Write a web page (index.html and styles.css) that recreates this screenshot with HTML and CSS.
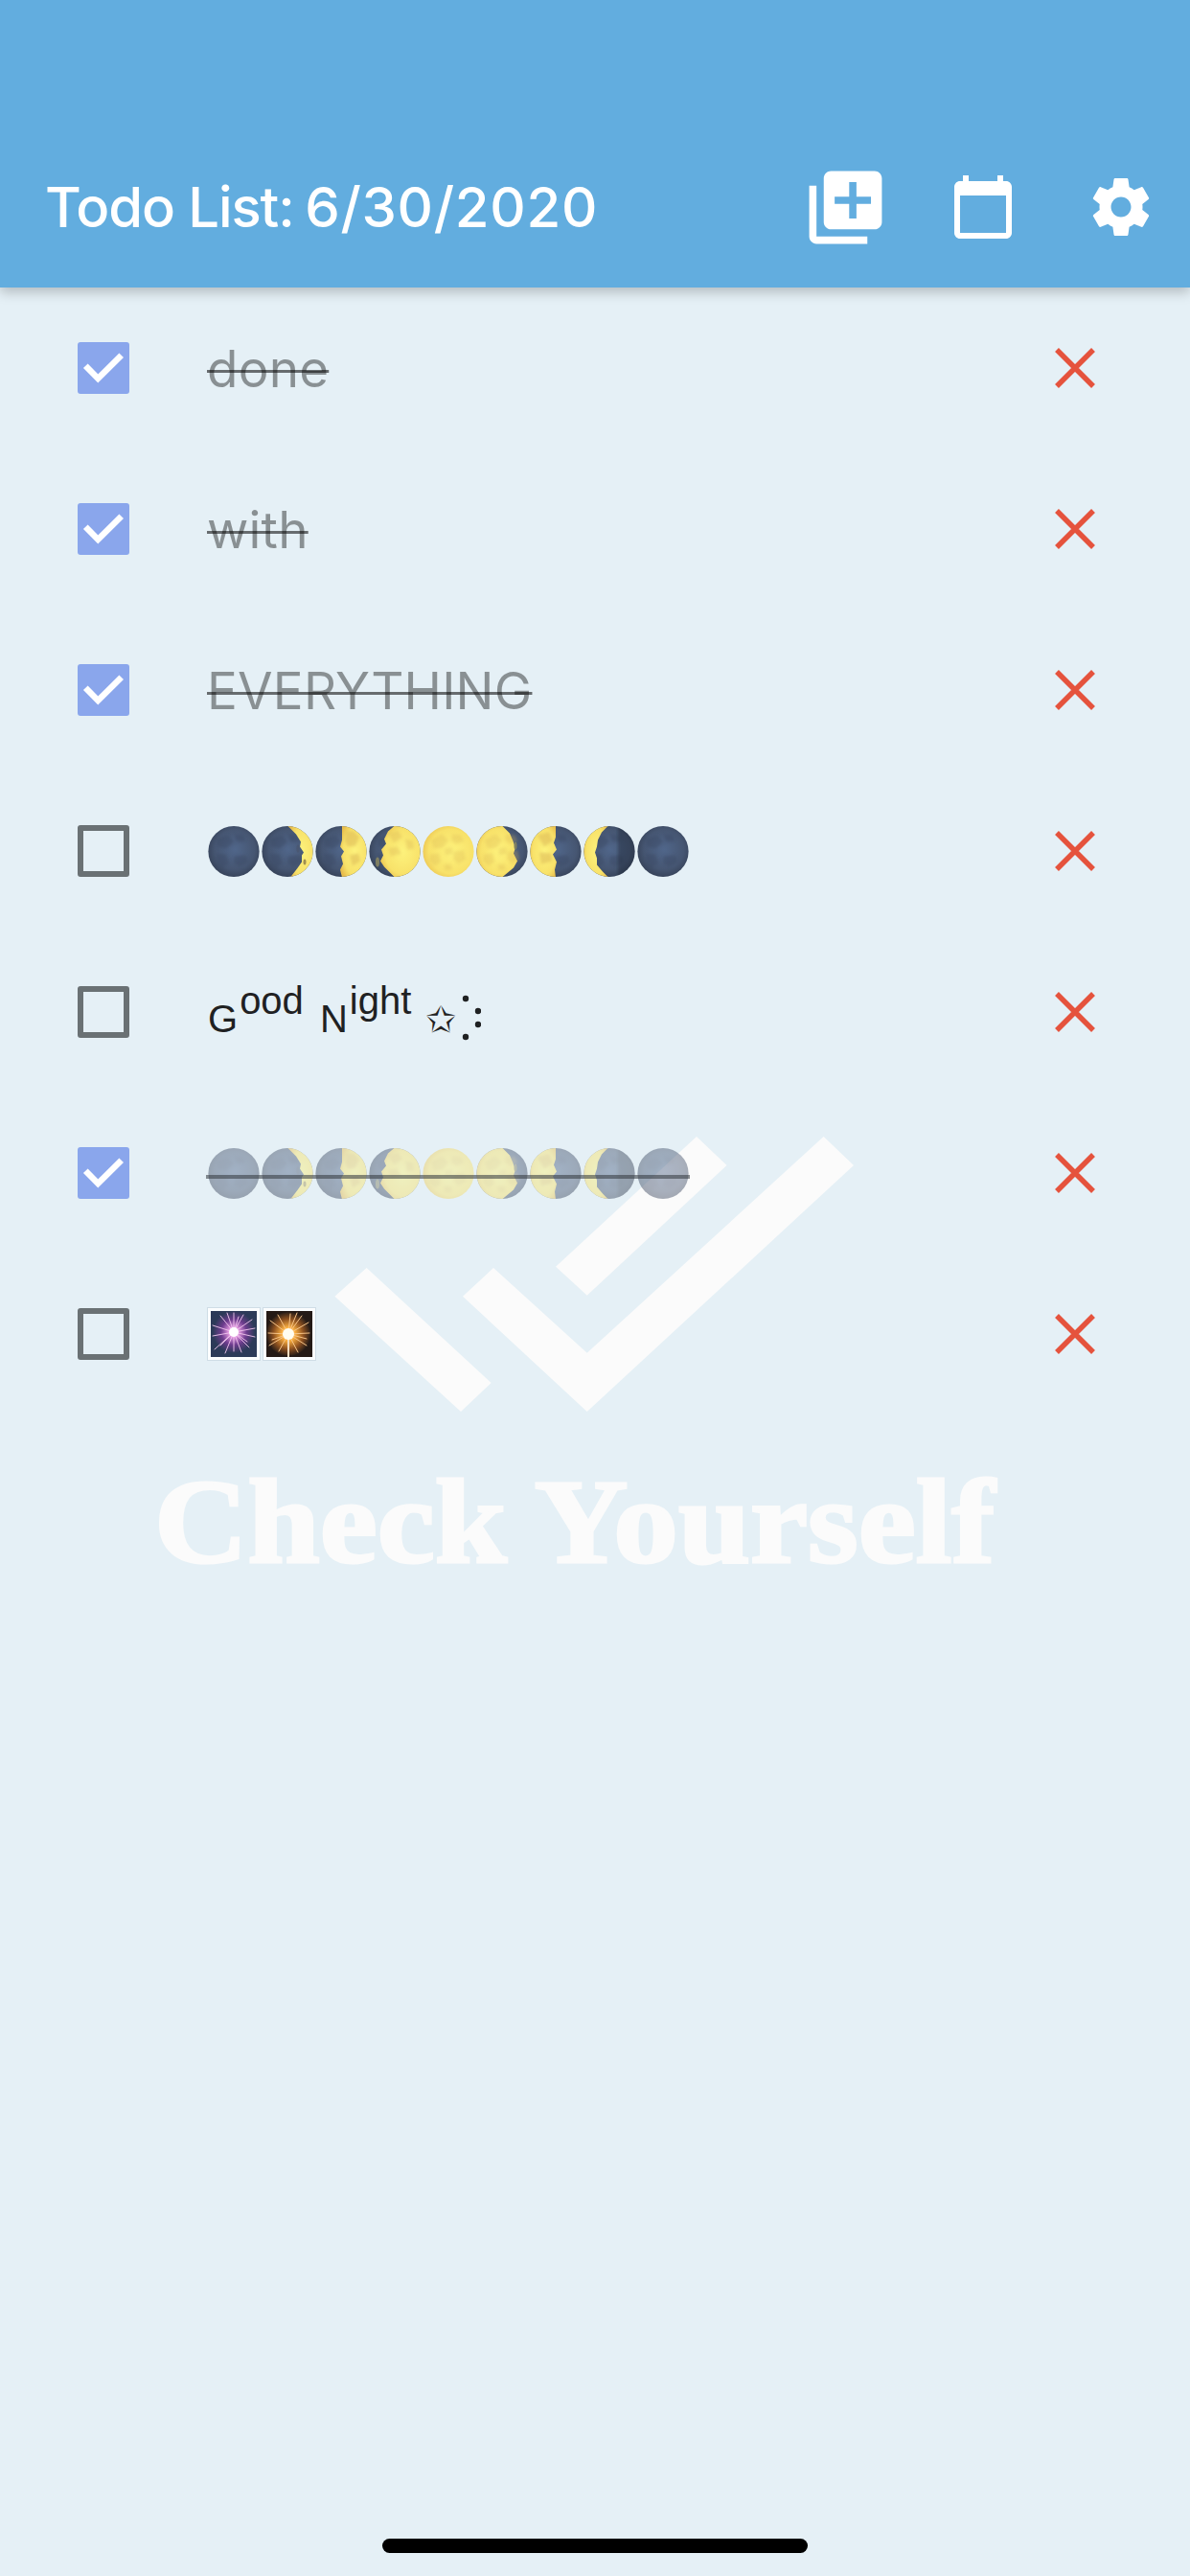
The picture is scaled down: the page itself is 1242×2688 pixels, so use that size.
FILE: index.html
```html
<!DOCTYPE html>
<html lang="en">
<head>
<meta charset="utf-8">
<title>Todo List</title>
<link rel="stylesheet" href="styles.css">
</head>
<body>
<svg class="sprite" aria-hidden="true">
  <defs>
    <filter id="soft" x="-10%" y="-10%" width="120%" height="120%"><feGaussianBlur stdDeviation="1.4"/></filter>
    <radialGradient id="darkGrad" cx="52%" cy="46%" r="60%">
      <stop offset="0" stop-color="#50668a"/>
      <stop offset="0.65" stop-color="#465672"/>
      <stop offset="1" stop-color="#323d52"/>
    </radialGradient>
    <radialGradient id="litGrad" cx="55%" cy="50%" r="62%">
      <stop offset="0" stop-color="#fdf27c"/>
      <stop offset="0.7" stop-color="#f8e26a"/>
      <stop offset="1" stop-color="#e8bd4c"/>
    </radialGradient>
    <clipPath id="disc"><circle cx="27" cy="27" r="26.6"/></clipPath>
    <g id="base">
      <circle cx="27" cy="27" r="26.6" fill="url(#darkGrad)"/>
      <g fill="#3b4965" opacity=".45" filter="url(#soft)">
        <path d="M9 14l12-4 6 7-8 7-9-2Z"/>
        <path d="M28 9l9 1 2 6-9 1Z"/>
        <path d="M9 29l10 1 3 9-8 6-5-8Z"/>
        <path d="M28 32l12-1 2 7-9 5-6-4Z"/>
      </g>
    </g>
    <g id="spots" fill="#d9b455" opacity=".28" filter="url(#soft)">
      <path d="M9 15l11-6 7 6-6 8-9 1Z"/>
      <path d="M31 9l9 1 3 6-8 3-5-4Z"/>
      <path d="M33 27l10-1 2 9-8 5-5-6Z"/>
      <path d="M8 30l9-1 2 9-7 4-5-6Z"/>
      <path d="M23 24l8-1 1 6-8 2Z"/>
      <path d="M22 41l7-1 2 6-7 1Z"/>
    </g>
    <g id="moon-new"><use href="#base"/></g>
    <g id="moon-waxc">
      <use href="#base"/>
      <g clip-path="url(#disc)">
        <path d="M27 0 36 9 41 17 40 22 44 28 42 31 42 38 37 45 30 54H54V0Z" fill="url(#litGrad)"/>
        <ellipse cx="38" cy="24" rx="1.6" ry="4" fill="#4a5873"/>
        <ellipse cx="45" cy="38" rx="1.5" ry="3" fill="#a08f50"/>
      </g>
    </g>
    <g id="moon-first">
      <use href="#base"/>
      <g clip-path="url(#disc)">
        <path d="M28 0V15L26 22 30 27 27 32 29 40 26 46 28 54H54V0Z" fill="url(#litGrad)"/>
        <g fill="#d9b455" opacity=".5" filter="url(#soft)"><path d="M32 6h8l6 6-4 9-8 1-3-6Z"/><path d="M36 31l9-2 2 8-8 5Z"/></g>
      </g>
    </g>
    <g id="moon-waxg">
      <use href="#base"/>
      <g clip-path="url(#disc)">
        <path d="M27 0 20 6 16 14 18 19 13 25 15 31 12 37 16 43 21 48 27 54H54V0Z" fill="url(#litGrad)"/>
        <g fill="#d9b455" opacity=".35" filter="url(#soft)"><path d="M20 8l10-3 5 7-9 6Z"/><path d="M20 24l9-2 5 7-11 3Z"/><path d="M38 14l8 2 1 8-7 1Z"/></g>
        <ellipse cx="9" cy="38" rx="2" ry="5" fill="#7f7f62"/>
      </g>
    </g>
    <g id="moon-full">
      <circle cx="27" cy="27" r="26.6" fill="url(#litGrad)"/>
      <g clip-path="url(#disc)"><use href="#spots"/></g>
    </g>
    <g id="moon-wang">
      <use href="#base"/>
      <g clip-path="url(#disc)">
        <path d="M27 0 35 8 38 15 41 23 39 29 43 37 39 44 33 49 27 54H0V0Z" fill="url(#litGrad)"/>
        <use href="#spots"/>
        <ellipse cx="41" cy="21" rx="1.5" ry="4" fill="#7f7f62"/>
      </g>
    </g>
    <g id="moon-last">
      <use href="#base"/>
      <g clip-path="url(#disc)">
        <path d="M27 0 27 12 25 18 28 25 24 30 28 38 26 46 27 54H0V0Z" fill="url(#litGrad)"/>
        <g fill="#d9b455" opacity=".5" filter="url(#soft)"><path d="M8 10l12-3 4 9-9 6Z"/><path d="M10 28l12 1 1 8-11 3Z"/></g>
      </g>
    </g>
    <g id="moon-wanc">
      <use href="#base"/>
      <g clip-path="url(#disc)">
        <path d="M26 0 19 7 15 15 14 22 12 28 14 34 14 41 20 48 26 54H0V0Z" fill="url(#litGrad)"/>
        <path d="M36 0h18v54H36Z" fill="#1f2735" opacity=".4" filter="url(#soft)"/>
      </g>
    </g>
  </defs>
</svg>

<div class="screen">
  <header class="appbar">
    <h1 class="title"><span class="title-name">Todo List:</span> <span class="title-date">6/30/2020</span></h1>
    <div class="actions">
      <button class="action">
        <svg class="icon-add" viewBox="0 0 24 24"><path d="M4 6H2v14c0 1.1.9 2 2 2h14v-2H4V6zm16-4H8c-1.1 0-2 .9-2 2v12c0 1.1.9 2 2 2h12c1.1 0 2-.9 2-2V4c0-1.1-.9-2-2-2zm-1 9h-4v4h-2v-4H9V9h4V5h2v4h4v2z"/></svg>
      </button>
      <button class="action">
        <svg class="icon-std" viewBox="0 0 24 24"><path d="M20 3h-1V1h-2v2H7V1H5v2H4c-1.1 0-2 .9-2 2v16c0 1.1.9 2 2 2h16c1.1 0 2-.9 2-2V5c0-1.1-.9-2-2-2zm0 18H4V8h16v13z"/></svg>
      </button>
      <button class="action">
        <svg class="icon-std" viewBox="0 0 24 24"><path d="M19.43 12.98c.04-.32.07-.64.07-.98s-.03-.66-.07-.98l2.11-1.65c.19-.15.24-.42.12-.64l-2-3.46c-.12-.22-.39-.3-.61-.22l-2.49 1c-.52-.4-1.08-.73-1.69-.98l-.38-2.65C14.46 2.18 14.25 2 14 2h-4c-.25 0-.46.18-.49.42l-.38 2.65c-.61.25-1.17.59-1.69.98l-2.49-1c-.23-.09-.49 0-.61.22l-2 3.46c-.13.22-.07.49.12.64l2.11 1.65c-.04.32-.07.65-.07.98s.03.66.07.98l-2.11 1.65c-.19.15-.24.42-.12.64l2 3.46c.12.22.39.3.61.22l2.49-1c.52.4 1.08.73 1.69.98l.38 2.65c.03.24.24.42.49.42h4c.25 0 .46-.18.49-.42l.38-2.65c.61-.25 1.17-.59 1.69-.98l2.49 1c.23.09.49 0 .61-.22l2-3.46c.12-.22.07-.49-.12-.64l-2.11-1.65zM12 15.5c-1.93 0-3.5-1.57-3.5-3.5s1.57-3.5 3.5-3.5 3.5 1.57 3.5 3.5-1.57 3.5-3.5 3.5z"/></svg>
      </button>
    </div>
  </header>

  <main class="content">
    <div class="logo">
      <svg class="logo-mark" viewBox="349 1186 542 287">
        <polygon points="382.6,1323 349.4,1352.7 481,1473 512.7,1443"/>
        <polygon points="727,1186 758.6,1216 612.7,1351.7 580,1321.7"/>
        <polygon points="515,1323 483,1352.7 612.7,1473 891,1216 859.6,1186 612.7,1411.7"/>
      </svg>
      <div class="logo-text">Check Yourself</div>
    </div>

    <ul class="list">
      <li class="row">
        <span class="box checked"><svg viewBox="0 0 54 54"><path d="M8.3 24.7 21.3 38 45.7 13.7"/></svg></span>
        <span class="label done">done</span>
        <svg class="del" viewBox="0 0 42 42"><path d="M2 2 40 40M40 2 2 40"/></svg>
      </li>
      <li class="row">
        <span class="box checked"><svg viewBox="0 0 54 54"><path d="M8.3 24.7 21.3 38 45.7 13.7"/></svg></span>
        <span class="label done">with</span>
        <svg class="del" viewBox="0 0 42 42"><path d="M2 2 40 40M40 2 2 40"/></svg>
      </li>
      <li class="row">
        <span class="box checked"><svg viewBox="0 0 54 54"><path d="M8.3 24.7 21.3 38 45.7 13.7"/></svg></span>
        <span class="label done">EVERYTHING</span>
        <svg class="del" viewBox="0 0 42 42"><path d="M2 2 40 40M40 2 2 40"/></svg>
      </li>
      <li class="row">
        <span class="box"></span>
        <span class="label moons">
          <svg class="moon" viewBox="0 0 54 54"><use href="#moon-new"/></svg>
          <svg class="moon" viewBox="0 0 54 54"><use href="#moon-waxc"/></svg>
          <svg class="moon" viewBox="0 0 54 54"><use href="#moon-first"/></svg>
          <svg class="moon" viewBox="0 0 54 54"><use href="#moon-waxg"/></svg>
          <svg class="moon" viewBox="0 0 54 54"><use href="#moon-full"/></svg>
          <svg class="moon" viewBox="0 0 54 54"><use href="#moon-wang"/></svg>
          <svg class="moon" viewBox="0 0 54 54"><use href="#moon-last"/></svg>
          <svg class="moon" viewBox="0 0 54 54"><use href="#moon-wanc"/></svg>
          <svg class="moon" viewBox="0 0 54 54"><use href="#moon-new"/></svg>
        </span>
        <svg class="del" viewBox="0 0 42 42"><path d="M2 2 40 40M40 2 2 40"/></svg>
      </li>
      <li class="row">
        <span class="box"></span>
        <span class="label night">
          <span class="cap">G</span><span class="raised">ood</span>
          <span class="cap">N</span><span class="raised">ight</span>
          <span class="star">✩</span>
          <svg class="dots" viewBox="0 0 20 50"><circle cx="4" cy="5" r="3.2"/><circle cx="17" cy="18" r="3.2"/><circle cx="17" cy="32" r="3.2"/><circle cx="4" cy="45" r="3.2"/></svg>
        </span>
        <svg class="del" viewBox="0 0 42 42"><path d="M2 2 40 40M40 2 2 40"/></svg>
      </li>
      <li class="row">
        <span class="box checked"><svg viewBox="0 0 54 54"><path d="M8.3 24.7 21.3 38 45.7 13.7"/></svg></span>
        <span class="label moons struck">
          <svg class="moon" viewBox="0 0 54 54"><use href="#moon-new"/></svg>
          <svg class="moon" viewBox="0 0 54 54"><use href="#moon-waxc"/></svg>
          <svg class="moon" viewBox="0 0 54 54"><use href="#moon-first"/></svg>
          <svg class="moon" viewBox="0 0 54 54"><use href="#moon-waxg"/></svg>
          <svg class="moon" viewBox="0 0 54 54"><use href="#moon-full"/></svg>
          <svg class="moon" viewBox="0 0 54 54"><use href="#moon-wang"/></svg>
          <svg class="moon" viewBox="0 0 54 54"><use href="#moon-last"/></svg>
          <svg class="moon" viewBox="0 0 54 54"><use href="#moon-wanc"/></svg>
          <svg class="moon" viewBox="0 0 54 54"><use href="#moon-new"/></svg>
        </span>
        <svg class="del" viewBox="0 0 42 42"><path d="M2 2 40 40M40 2 2 40"/></svg>
      </li>
      <li class="row">
        <span class="box"></span>
        <span class="label tiles">
          <svg class="tile" viewBox="0 0 56 56">
            <defs><radialGradient id="burstA"><stop offset="0" stop-color="#ffffff"/><stop offset=".22" stop-color="#e89ce4"/><stop offset=".6" stop-color="#6e3c8e"/><stop offset="1" stop-color="#2c3a58"/></radialGradient></defs>
            <rect x=".5" y=".5" width="55" height="55" fill="#fbfdfe" stroke="#cfdde6"/>
            <rect x="4" y="4" width="48" height="48" fill="#2c3a58"/>
            <circle cx="28" cy="26" r="22" fill="url(#burstA)"/>
            <g stroke="#f2c6ee" stroke-width=".9" stroke-linecap="round">
              <path d="M28 26 28 6M28 26 38 8M28 26 47 13M28 26 50 22M28 26 50 31M28 26 44 42M28 26 36 47M28 26 28 46M28 26 19 48M28 26 8 44M28 26 6 30M28 26 6 19M28 26 14 9M28 26 21 6M28 26 33 10M28 26 42 36M28 26 14 40"/>
            </g>
            <circle cx="28" cy="26" r="5" fill="#fff"/>
          </svg>
          <svg class="tile" viewBox="0 0 56 56">
            <defs><radialGradient id="burstB"><stop offset="0" stop-color="#fffbe0"/><stop offset=".3" stop-color="#fbb040"/><stop offset=".68" stop-color="#8f5220"/><stop offset="1" stop-color="#2a1e18"/></radialGradient></defs>
            <rect x=".5" y=".5" width="55" height="55" fill="#fbfdfe" stroke="#cfdde6"/>
            <rect x="4" y="4" width="48" height="48" fill="#241a16"/>
            <circle cx="27" cy="28" r="23" fill="url(#burstB)"/>
            <g stroke="#f7c488" stroke-width="1" stroke-linecap="round">
              <path d="M27 28 29 7M27 28 41 9M27 28 48 16M27 28 49 27M27 28 46 40M27 28 37 47M27 28 17 46M27 28 7 40M27 28 6 27M27 28 8 14M27 28 16 8M27 28 36 6M27 28 46 33M27 28 10 34"/>
            </g>
            <path d="M27 28V52" stroke="#f3dcc0" stroke-width="2"/>
            <circle cx="27" cy="28" r="6" fill="#fffdf0"/>
          </svg>
        </span>
        <svg class="del" viewBox="0 0 42 42"><path d="M2 2 40 40M40 2 2 40"/></svg>
      </li>
    </ul>

    <div class="home-bar"></div>
  </main>
</div>
</body>
</html>
```
FILE: styles.css
```css
* { box-sizing: border-box; }
html, body { margin: 0; padding: 0; }
body {
  width: 1242px;
  height: 2688px;
  background: #e5f0f6;
  font-family: "Inter", "Liberation Sans", sans-serif;
  overflow: hidden;
}
.sprite { position: absolute; width: 0; height: 0; }
.screen { display: flex; flex-direction: column; height: 2688px; }

.appbar {
  position: relative;
  z-index: 2;
  height: 300px;
  flex: none;
  padding-top: 132px;
  padding-left: 47px;
  display: flex;
  align-items: center;
  justify-content: space-between;
  background: #62addf;
  box-shadow: 0 5px 12px rgba(0, 0, 0, .22);
}
.title {
  margin: 0;
  color: #fff;
  font-size: 58px;
  font-weight: 500;
}
.title-name { letter-spacing: -1.1px; }
.title-date { letter-spacing: 0.7px; margin-left: -4px; }
.actions { display: flex; }
.action {
  width: 144px;
  height: 168px;
  padding: 0;
  border: 0;
  background: none;
  display: flex;
  align-items: center;
  justify-content: center;
}
.action svg { fill: #fff; display: block; }
.icon-add { width: 91px; height: 91px; }
.icon-std { width: 72px; height: 72px; }

.content {
  position: relative;
  flex: 1;
  display: flex;
  flex-direction: column;
}
.logo {
  position: absolute;
  left: 161px;
  top: 886px;
  width: 880px;
}
.logo-mark {
  display: block;
  width: 542px;
  height: 287px;
  margin-left: 188px;
  fill: #fbfbfb;
}
.logo-text {
  margin-top: 46px;
  color: #fbfbfb;
  font-family: "Liberation Serif", serif;
  font-weight: 700;
  font-size: 124px;
  line-height: 140px;
  white-space: nowrap;
  -webkit-text-stroke: 3px #fbfbfb;
  transform: scaleX(1.09);
  transform-origin: left center;
}

.list {
  position: relative;
  z-index: 1;
  list-style: none;
  margin: 0;
  padding: 0;
}
.row {
  height: 168px;
  padding: 0 99px 0 81px;
  display: flex;
  align-items: center;
}
.box {
  flex: none;
  width: 54px;
  height: 54px;
  border: 6px solid #6a7174;
  border-radius: 3px;
}
.box.checked { border: 0; background: #8aa6ec; }
.box svg { display: block; width: 54px; height: 54px; fill: none; stroke: #fff; stroke-width: 6.5; }
.label {
  flex: 1;
  margin-left: 81px;
  font-size: 53px;
  line-height: 60px;
  color: #1f2122;
}
.done {
  padding-top: 2px;
  letter-spacing: 0.2px;
  color: rgba(0, 0, 0, .4);
  text-decoration: line-through;
  text-decoration-color: rgba(0, 0, 0, .55);
  text-decoration-thickness: 3px;
}
.del {
  flex: none;
  width: 42px;
  height: 42px;
  fill: none;
  stroke: #e5533d;
  stroke-width: 5.5;
}

.moons { display: flex; gap: 2px; height: 55px; position: relative; flex: none; margin-left: 82px; margin-right: auto; }
.moon { display: block; width: 54px; height: 55px; flex: none; }
.struck .moon { opacity: .45; }
.struck::after {
  content: "";
  position: absolute;
  left: -2px;
  top: 29px;
  width: 505px;
  height: 4px;
  background: rgba(50, 55, 60, .55);
}
.night {
  font-family: "Liberation Sans", sans-serif;
  font-size: 40px;
  height: 60px;
  line-height: 60px;
  white-space: nowrap;
  display: flex;
  align-items: baseline;
  padding-top: 7px;
}
.cap { margin-left: 1px; }
.raised { position: relative; top: -19px; margin-left: 2px; margin-right: 16px; }
.star { font-family: "DejaVu Sans", sans-serif; font-size: 38px; margin-left: -1px; color: #222; }
.dots { width: 20px; height: 50px; fill: #1f2122; align-self: center; margin-left: 6px; margin-top: 4px; }

.tiles { display: flex; gap: 2px; height: 56px; }
.tile { display: block; width: 56px; height: 56px; flex: none; }

.home-bar {
  width: 444px;
  height: 15px;
  margin: auto auto 24px;
  background: #000;
  border-radius: 8px;
}
```
